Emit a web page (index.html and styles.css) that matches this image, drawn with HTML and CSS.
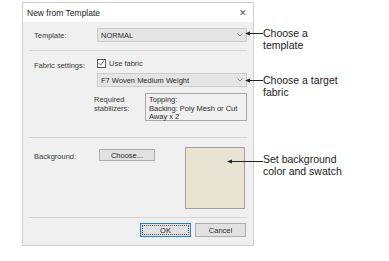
FILE: index.html
```html
<!DOCTYPE html>
<html lang="en">
<head>
  <meta charset="UTF-8">
  <title>New from Template</title>
  <link rel="stylesheet" href="styles.css">
</head>
<body>
  <div class="page">
    <div class="dialog">
      <div class="title-bar">
        <span class="title">New from Template</span>
        <span class="close">&#x2715;</span>
      </div>
      <div class="dialog-body">
        <div class="section section-template">
          <div class="label">Template:</div>
          <div class="combo">
            <span>NORMAL</span>
            <svg class="chevron" width="6" height="4" viewBox="0 0 6 4"><polyline points="0.5,0.5 3,3 5.5,0.5" fill="none" stroke="#8a8a8a" stroke-width="1"/></svg>
          </div>
        </div>
        <hr class="sep">
        <div class="section section-fabric">
          <div class="label label-fabric">Fabric settings:</div>
          <div class="field">
            <label class="check-row">
              <span class="checkbox">
                <svg width="8" height="8" viewBox="0 0 8 8"><polyline points="1,4 3,6.5 7,1" fill="none" stroke="#555" stroke-width="1"/></svg>
              </span>
              <span>Use fabric</span>
            </label>
            <div class="combo">
              <span>F7 Woven Medium Weight</span>
              <svg class="chevron" width="6" height="4" viewBox="0 0 6 4"><polyline points="0.5,0.5 3,3 5.5,0.5" fill="none" stroke="#8a8a8a" stroke-width="1"/></svg>
            </div>
            <div class="stabilizers">
              <div class="stab-label">Required<br>stabilizers:</div>
              <div class="stab-box">Topping:<br>Backing: Poly Mesh or Cut<br>Away x 2</div>
            </div>
          </div>
        </div>
        <hr class="sep">
        <div class="section section-bg">
          <div class="label label-bg">Background:</div>
          <div class="field bg-field">
            <button class="btn btn-choose">Choose...</button>
            <div class="swatch"></div>
          </div>
        </div>
        <hr class="sep">
        <div class="footer">
          <button class="btn btn-ok"><span class="focus">OK</span></button>
          <button class="btn">Cancel</button>
        </div>
      </div>
    </div>

    <div class="callout callout-template">
      <svg class="pointer" width="18" height="5" viewBox="0 0 18 5"><polygon points="0,2.5 5,0.5 5,4.5" fill="#222"/><line x1="4" y1="2.5" x2="18" y2="2.5" stroke="#222" stroke-width="1"/></svg>
      <div class="callout-text">Choose a<br>template</div>
    </div>
    <div class="callout callout-fabric">
      <svg class="pointer" width="18" height="5" viewBox="0 0 18 5"><polygon points="0,2.5 5,0.5 5,4.5" fill="#222"/><line x1="4" y1="2.5" x2="18" y2="2.5" stroke="#222" stroke-width="1"/></svg>
      <div class="callout-text">Choose a target<br>fabric</div>
    </div>
    <div class="callout callout-bg">
      <svg class="pointer" width="36" height="5" viewBox="0 0 36 5"><polygon points="0,2.5 5,0.5 5,4.5" fill="#222"/><line x1="4" y1="2.5" x2="36" y2="2.5" stroke="#222" stroke-width="1"/></svg>
      <div class="callout-text">Set background<br>color and swatch</div>
    </div>
  </div>
</body>
</html>
```

FILE: styles.css
```css
body {
  margin: 0;
  background-color: #fff;
  font-family: "Liberation Sans", Arial, sans-serif;
  color: #3a3a3a;
}
.page {
  position: relative;
  width: 389px;
  height: 261px;
  padding-top: 2px;
  box-sizing: border-box;
}
.dialog {
  margin-left: 22px;
  width: 232px;
  border: 1px solid #cfcfcf;
  box-sizing: border-box;
  background-color: #f0f0f0;
}
.title-bar {
  height: 19px;
  background-color: #fff;
  display: flex;
  align-items: center;
  justify-content: space-between;
  padding: 0 6px 0 4px;
}
.title {
  font-size: 8.5px;
  color: #222;
}
.close {
  font-size: 9px;
  color: #555;
}
.dialog-body {
  padding: 0 6px 8px 6px;
}
.sep {
  margin: 0;
  border: none;
  border-top: 1px solid #d4d4d4;
  height: 0;
}
.section {
  display: grid;
  grid-template-columns: 68px 1fr;
  font-size: 7.5px;
}
.label {
  padding-left: 5px;
}
.section-template {
  padding: 6px 0 8px 0;
  align-items: center;
}
.combo {
  height: 14px;
  box-sizing: border-box;
  border: 1px solid #cdcdcd;
  background-color: #e5e5e5;
  display: flex;
  align-items: center;
  justify-content: space-between;
  padding: 0 3px 0 3px;
  font-size: 7.5px;
  color: #2a2a2a;
}
.section-fabric {
  padding: 7px 0 16px 0;
}
.label-fabric {
  margin-top: 3px;
}
.field {
  display: flex;
  flex-direction: column;
}
.check-row {
  display: flex;
  align-items: center;
  gap: 3px;
  height: 10px;
  margin-bottom: 5px;
}
.checkbox {
  width: 9px;
  height: 9px;
  box-sizing: border-box;
  border: 1px solid #555;
  background-color: #fff;
  display: flex;
  align-items: center;
  justify-content: center;
}
.stabilizers {
  display: flex;
  margin-top: 6px;
  margin-left: -3px;
}
.stab-label {
  width: 51px;
  padding-top: 2px;
  line-height: 9px;
}
.stab-box {
  flex: 1;
  height: 28px;
  box-sizing: border-box;
  border: 1px solid #a8a8a8;
  background-color: #f0f0f0;
  padding: 2px 3px;
  line-height: 8.5px;
  color: #2a2a2a;
}
.section-bg {
  padding: 9px 0 8px 0;
}
.label-bg {
  margin-top: 5px;
}
.bg-field {
  flex-direction: row;
  align-items: flex-start;
  justify-content: space-between;
  padding-right: 2px;
}
.btn {
  font-family: "Liberation Sans", Arial, sans-serif;
  font-size: 7.5px;
  color: #2a2a2a;
  background-color: #e1e1e1;
  border: 1px solid #adadad;
  padding: 0;
  height: 13px;
  width: 51px;
}
.btn-choose {
  margin-top: 2px;
  margin-left: 2px;
  width: 56px;
  height: 12px;
}
.swatch {
  width: 60px;
  height: 62px;
  box-sizing: border-box;
  border: 1px solid #a0a0a0;
  background-color: #e8e4d4;
}
.footer {
  display: flex;
  justify-content: flex-end;
  gap: 4px;
  padding-top: 5px;
  padding-right: 1px;
}
.footer .btn {
  height: 14px;
}
.btn-ok {
  border: 1px solid #2a7fd0;
  padding: 1px;
}
.focus {
  display: flex;
  align-items: center;
  justify-content: center;
  height: 100%;
  border: 1px dotted #555;
  box-sizing: border-box;
}
.callout {
  position: absolute;
  display: flex;
  align-items: flex-start;
  font-size: 10.5px;
  line-height: 12px;
  color: #222;
}
.pointer {
  margin-top: 4px;
  flex-shrink: 0;
}
.callout-template {
  left: 245px;
  top: 27px;
}
.callout-fabric {
  left: 245px;
  top: 74px;
}
.callout-bg {
  left: 227px;
  top: 153px;
}
.callout-bg .pointer {
  margin-top: 6px;
}
```
